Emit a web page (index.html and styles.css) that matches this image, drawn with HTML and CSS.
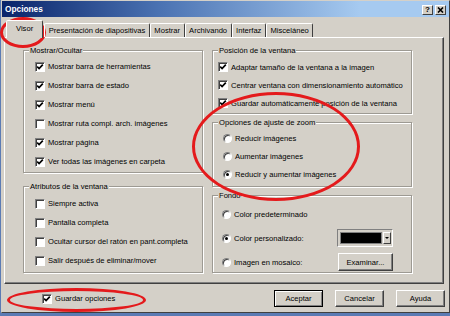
FILE: index.html
```html
<!DOCTYPE html>
<html lang="es">
<head>
    <meta charset="UTF-8">
    <title>Opciones</title>
    <link rel="stylesheet" href="styles.css">
</head>
<body>
    <div class="window">
        <div class="titlebar">
            <span class="title">Opciones</span>
            <div class="tbtns">
                <span class="tbtn">?</span>
                <span class="tbtn">
                    <svg width="7" height="6" viewBox="0 0 7 6"><path d="M1 0.5 L6 5.5 M6 0.5 L1 5.5" stroke="#000" stroke-width="1.6"/></svg>
                </span>
            </div>
        </div>

        <div class="tabs">
            <span class="tab active">Visor</span>
            <span class="tab">Presentación de diapositivas</span>
            <span class="tab">Mostrar</span>
            <span class="tab">Archivando</span>
            <span class="tab">Interfaz</span>
            <span class="tab">Misceláneo</span>
        </div>

        <div class="panel">
            <div class="col col-left">
                <div class="group g-show">
                    <span class="group-title">Mostrar/Ocultar</span>
                    <div class="row"><span class="check on"></span>Mostrar barra de herramientas</div>
                    <div class="row"><span class="check on"></span>Mostrar barra de estado</div>
                    <div class="row"><span class="check on"></span>Mostrar menú</div>
                    <div class="row"><span class="check"></span>Mostrar ruta compl. arch. imágenes</div>
                    <div class="row"><span class="check on"></span>Mostrar página</div>
                    <div class="row"><span class="check on"></span>Ver todas las imágenes en carpeta</div>
                </div>
                <div class="group g-attr">
                    <span class="group-title">Atributos de la ventana</span>
                    <div class="row"><span class="check"></span>Siempre activa</div>
                    <div class="row"><span class="check"></span>Pantalla completa</div>
                    <div class="row"><span class="check"></span>Ocultar cursor del ratón en pant.completa</div>
                    <div class="row"><span class="check"></span>Salir después de eliminar/mover</div>
                </div>
            </div>

            <div class="col">
                <div class="group g-pos">
                    <span class="group-title">Posición de la ventana</span>
                    <div class="row"><span class="check on"></span>Adaptar tamaño de la ventana a la imagen</div>
                    <div class="row"><span class="check on"></span>Centrar ventana con dimensionamiento automático</div>
                    <div class="row"><span class="check on"></span>Guardar automáticamente posición de la ventana</div>
                </div>
                <div class="group g-zoom">
                    <span class="group-title">Opciones de ajuste de zoom</span>
                    <div class="row"><span class="radio"></span>Reducir imágenes</div>
                    <div class="row"><span class="radio"></span>Aumentar imágenes</div>
                    <div class="row"><span class="radio on"></span>Reducir y aumentar imágenes</div>
                </div>
                <div class="group g-bg">
                    <span class="group-title">Fondo</span>
                    <div class="row"><span class="radio"></span>Color predeterminado</div>
                    <div class="row">
                        <span class="radio on"></span>Color personalizado:
                        <span class="combo"><span class="swatch"></span><span class="drop"></span></span>
                    </div>
                    <div class="row">
                        <span class="radio"></span>Imagen en mosaico:
                        <span class="btn btn-browse">Examinar...</span>
                    </div>
                </div>
            </div>
        </div>

        <div class="footer">
            <div class="row"><span class="check on"></span>Guardar opciones</div>
            <div class="buttons">
                <span class="btn default">Aceptar</span>
                <span class="btn">Cancelar</span>
                <span class="btn">Ayuda</span>
            </div>
        </div>
    </div>

    <div class="mark mark-tab"></div>
    <div class="mark mark-zoom"></div>
    <div class="mark mark-save"></div>
</body>
</html>
```

FILE: styles.css
```css
body {
    margin: 0;
    width: 450px;
    height: 316px;
    overflow: hidden;
    position: relative;
    background-color: #5b7bb4;
    font-family: "Liberation Sans", Arial, sans-serif;
    font-size: 7.6px;
    color: #000;
}

.window {
    margin-left: 1px;
    width: 449px;
    height: 313px;
    box-sizing: border-box;
    background-color: #d4d0c8;
    border: 1px solid;
    border-color: #d4d0c8 #404040 #404040 #d4d0c8;
    display: flex;
    flex-direction: column;
}

/* barra de titulo */
.titlebar {
    height: 16px;
    display: flex;
    align-items: center;
    justify-content: space-between;
    padding: 0 3px 0 3px;
    background: linear-gradient(90deg, #0a246a 0%, #4a72b2 35%, #a6caf0 80%, #a6caf0 100%);
}
.title {
    color: #fff;
    font-weight: bold;
    font-size: 8.3px;
}
.tbtns {
    display: flex;
    gap: 2px;
    margin-top: 1px;
}
.tbtn {
    width: 11px;
    height: 10px;
    box-sizing: border-box;
    background-color: #d4d0c8;
    border: 1px solid;
    border-color: #fff #404040 #404040 #fff;
    display: flex;
    align-items: center;
    justify-content: center;
    font-weight: bold;
    font-size: 8px;
    line-height: 8px;
}

/* pestañas */
.tabs {
    display: flex;
    align-items: flex-end;
    height: 17px;
    margin-top: 3px;
    padding-left: 4px;
    position: relative;
    z-index: 1;
}
.tab {
    height: 14px;
    box-sizing: border-box;
    padding: 0 3.5px;
    border: 1px solid;
    border-bottom: none;
    border-color: #fff #404040 transparent #fff;
    border-radius: 2px 2px 0 0;
    display: flex;
    align-items: center;
    white-space: nowrap;
}
.tab.active {
    height: 18px;
    margin-bottom: -1px;
    margin-right: 1px;
    padding: 0 9px 2px;
    background-color: #d4d0c8;
}

.panel {
    margin-left: 2px;
    width: 440px;
    height: 247px;
    box-sizing: border-box;
    border: 1px solid;
    border-color: #fff #404040 #404040 #fff;
    box-shadow: inset -1px -1px 0 #808080;
    padding: 12px 0 0 18px;
    display: grid;
    grid-template-columns: 180px 200px;
    column-gap: 9px;
    align-content: start;
}

.col {
    display: flex;
    flex-direction: column;
    gap: 8px;
}
.col-left {
    gap: 13px;
}

/* grupos */
.group {
    position: relative;
    box-sizing: border-box;
    border: 1px solid #9d9a93;
    box-shadow: 1px 1px 0 #fff, inset 1px 1px 0 #fff;
}
.group-title {
    position: absolute;
    top: -6px;
    left: 5px;
    padding: 0 1px;
    line-height: 11px;
    background-color: #d4d0c8;
    white-space: nowrap;
}
.g-show {
    height: 123px;
    padding: 6px 0 0 11px;
}
.g-attr {
    height: 87px;
    padding: 7px 0 0 11px;
}
.g-pos {
    height: 64px;
    padding: 7px 0 0 5px;
}
.g-zoom {
    height: 65px;
    padding: 6px 0 0 10px;
}
.g-bg {
    height: 78px;
    padding: 6px 18px 0 9px;
}

.row {
    display: flex;
    align-items: center;
    gap: 3px;
    height: 19px;
    white-space: nowrap;
}
.g-pos .row,
.g-zoom .row {
    height: 18px;
}
.g-bg .row {
    height: 24px;
}

/* casillas */
.check {
    flex: none;
    width: 10px;
    height: 10px;
    box-sizing: border-box;
    background-color: #fff;
    border: 1px solid;
    border-color: #808080 #fff #fff #808080;
    box-shadow: inset 1px 1px 0 #404040;
}
.check.on {
    background: #fff url("data:image/svg+xml,%3Csvg xmlns='http://www.w3.org/2000/svg' width='8' height='8' viewBox='0 0 8 8'%3E%3Cpath d='M1.2 3.6 L3.1 5.5 L6.8 1.6' fill='none' stroke='%23000' stroke-width='1.7'/%3E%3C/svg%3E") no-repeat center;
}
.radio {
    flex: none;
    width: 9px;
    height: 9px;
    box-sizing: border-box;
    border-radius: 50%;
    background-color: #fff;
    border: 1px solid;
    border-color: #808080 #fff #fff #808080;
    box-shadow: inset 1px 1px 0 #404040;
    display: flex;
    align-items: center;
    justify-content: center;
}
.radio.on::after {
    content: "";
    width: 3px;
    height: 3px;
    border-radius: 50%;
    background-color: #000;
}

/* selector de color */
.combo {
    margin-left: auto;
    width: 56px;
    height: 18px;
    box-sizing: border-box;
    border: 1px solid;
    border-color: #808080 #fff #fff #808080;
    padding: 2px 1px 2px 2px;
    display: flex;
    gap: 1px;
}
.swatch {
    flex: 1;
    background-color: #000;
    border: 1px solid #808080;
}
.drop {
    width: 8px;
    box-sizing: border-box;
    border: 1px solid;
    border-color: #fff #404040 #404040 #fff;
    display: flex;
    align-items: center;
    justify-content: center;
}
.drop::after {
    content: "";
    border-left: 2px solid transparent;
    border-right: 2px solid transparent;
    border-top: 2px solid #000;
}

/* botones */
.btn {
    flex: none;
    width: 49px;
    height: 17px;
    box-sizing: border-box;
    background-color: #d4d0c8;
    border: 1px solid;
    border-color: #fff #404040 #404040 #fff;
    box-shadow: inset -1px -1px 0 #808080;
    display: flex;
    align-items: center;
    justify-content: center;
}
.btn.default {
    border-color: #000;
    box-shadow: inset 1px 1px 0 #fff, inset -1px -1px 0 #808080;
}
.btn-browse {
    margin-left: auto;
    width: 55px;
    height: 18px;
}

.footer {
    display: flex;
    align-items: center;
    justify-content: space-between;
    padding: 6px 4px 0 40px;
}
.footer .row {
    height: 17px;
}
.buttons {
    display: flex;
    gap: 12px;
}

/* marcas rojas */
.mark {
    position: absolute;
    box-sizing: border-box;
    border: 3px solid #e41a1c;
    border-radius: 50%;
}
.mark-tab {
    left: 0;
    top: 17px;
    width: 46px;
    height: 31px;
}
.mark-zoom {
    left: 192px;
    top: 92px;
    width: 168px;
    height: 109px;
}
.mark-save {
    left: 7px;
    top: 288px;
    width: 139px;
    height: 24px;
}
```
